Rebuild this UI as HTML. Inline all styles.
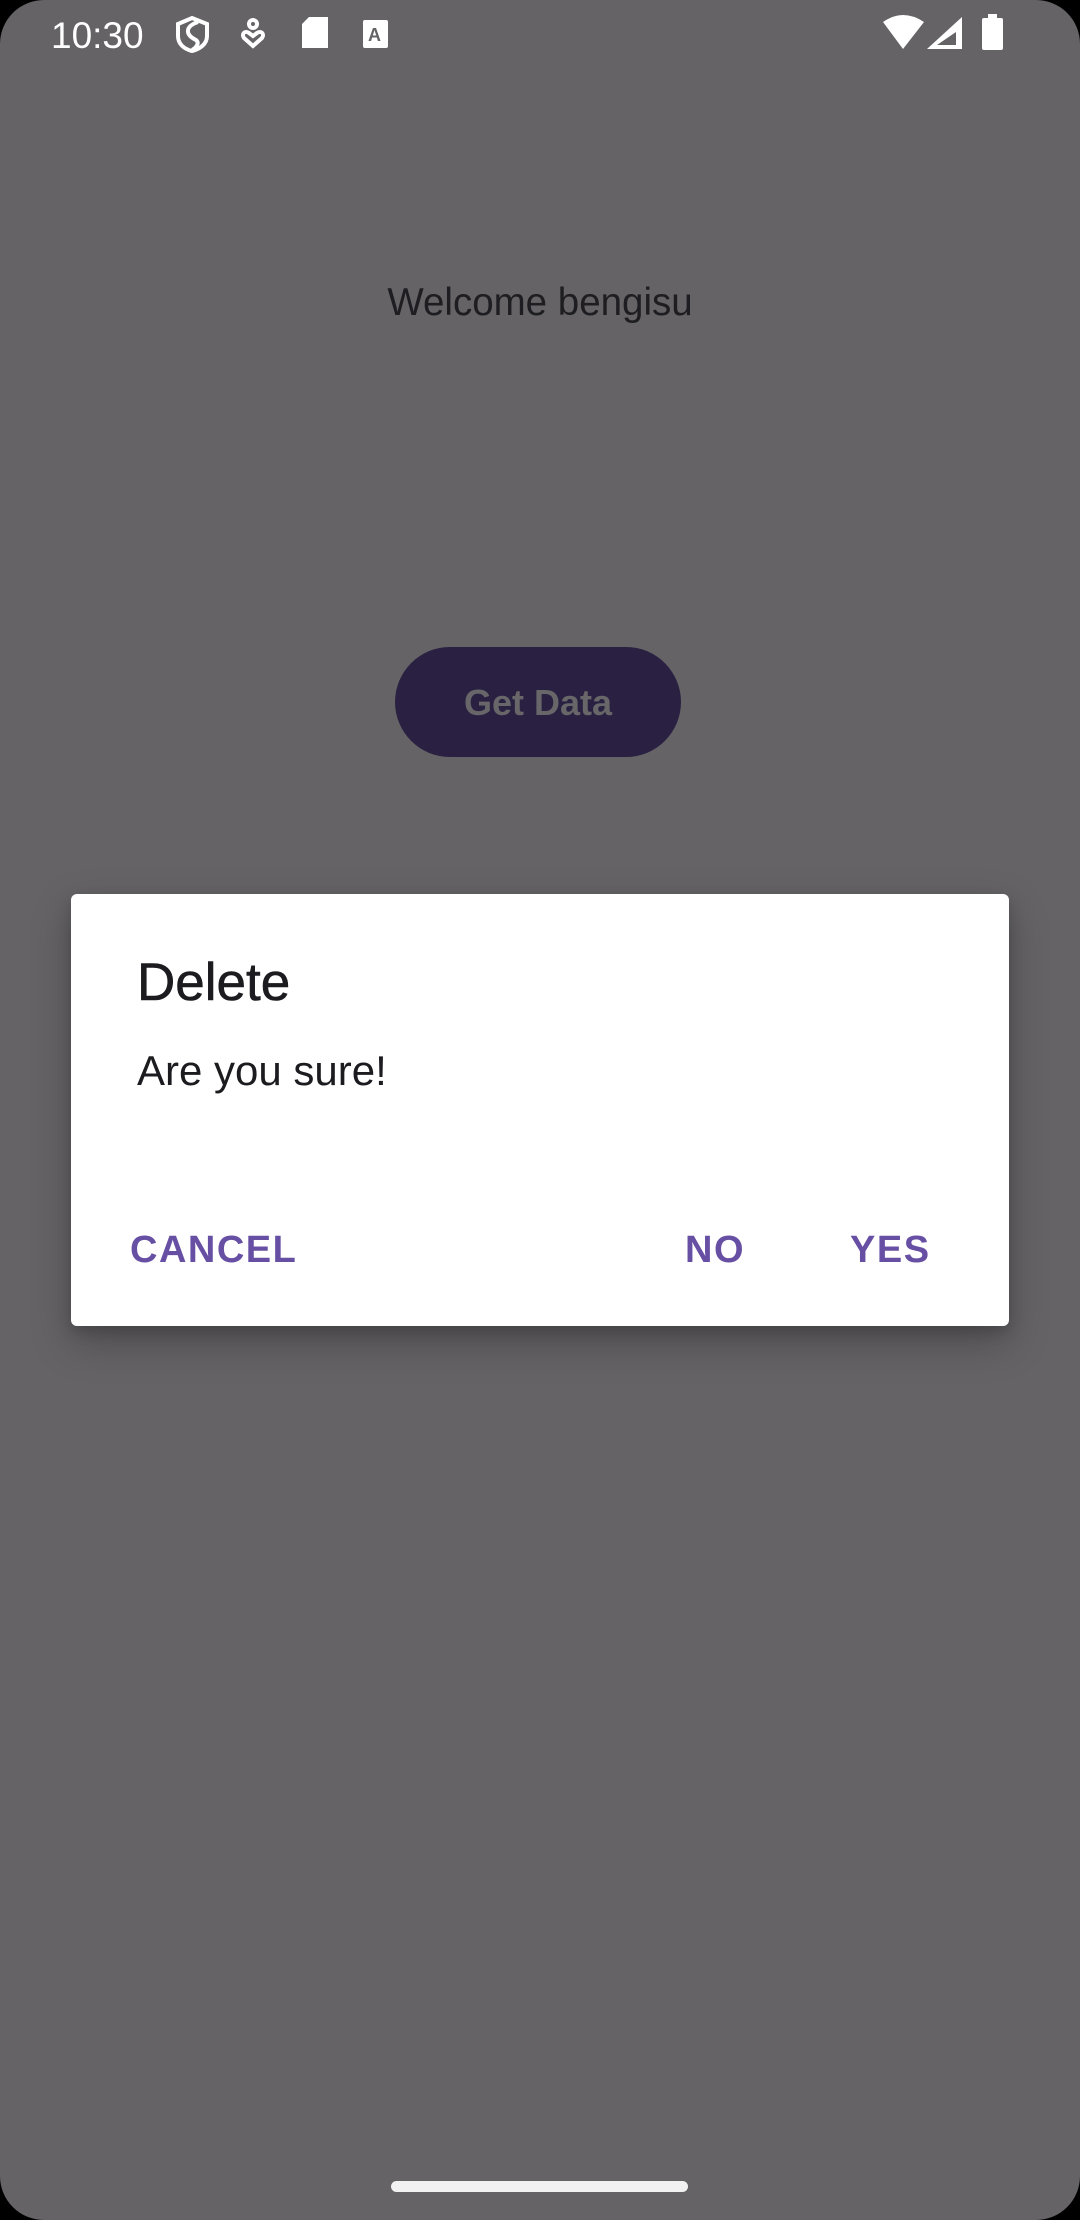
<!DOCTYPE html>
<html><head><meta charset="utf-8"><style>
*{margin:0;padding:0;box-sizing:border-box}
html,body{width:1080px;height:2220px;background:#000;overflow:hidden}
#s{position:absolute;left:0;top:0;width:1080px;height:2220px;background:#656366;border-radius:44px;overflow:hidden;font-family:"Liberation Sans",sans-serif}
.t{position:absolute;white-space:nowrap;line-height:1}
</style></head><body><div id="s">
<div class="t" style="left:51px;top:17px;font-size:37px;color:#fff;letter-spacing:0px">10:30</div>
<svg style="position:absolute;left:0;top:0" width="1080" height="60">
<g fill="none" stroke="#fff" stroke-width="4">
<path d="M192 18 L207 24 V36 C207 44 200 49 192 51 C184 49 178 44 178 36 V24 Z"/>
<path d="M198 22 C186 26 184 34 196 40 C200 43 196 48 192 50"/>
<circle cx="253" cy="24" r="4"/>
<path d="M253 46 L244 38 C241 34 245 30 249 33 L253 36 L257 33 C261 30 265 34 262 38 Z"/>
</g>
<path fill="#fff" d="M309 17 H328 V48 H302 V24 Z"/>
<rect x="363" y="20" width="25" height="28" rx="2" fill="#fff"/>
<text x="368" y="41" font-family="Liberation Sans" font-size="18" font-weight="bold" fill="#656366">A</text>
<path fill="#fff" d="M883 22 Q903 8 924 22 L903 49 Z"/>
<path fill="#fff" d="M962 17 V49 H927 Z M956 32 L937 45 H956 Z" fill-rule="evenodd"/>
<rect x="988" y="14" width="9" height="5" fill="#fff"/>
<rect x="982" y="18" width="21" height="32" rx="2" fill="#fff"/>
</svg>
<div class="t" style="left:0;width:1080px;text-align:center;top:284px;font-size:38.5px;color:#1e1d21;padding-left:-4px">Welcome bengisu</div>
<div style="position:absolute;left:395px;top:647px;width:286px;height:110px;border-radius:55px;background:#2a2142"></div>
<div class="t" style="left:395px;width:286px;text-align:center;top:685px;font-size:36px;font-weight:bold;color:#686669">Get Data</div>
<div style="position:absolute;left:71px;top:894px;width:938px;height:432px;background:#fff;border-radius:6px;box-shadow:0 16px 40px rgba(0,0,0,0.25),0 6px 14px rgba(0,0,0,0.15)"></div>
<div class="t" style="left:137px;top:956px;font-size:53px;color:#1c1b1f;-webkit-text-stroke:0.6px #1c1b1f">Delete</div>
<div class="t" style="left:137px;top:1050px;font-size:42px;color:#1c1b1f">Are you sure!</div>
<div class="t" style="left:130px;top:1231px;font-size:38px;font-weight:bold;color:#6750a4;letter-spacing:1.5px">CANCEL</div>
<div class="t" style="left:685px;top:1231px;font-size:38px;font-weight:bold;color:#6750a4;letter-spacing:1.5px">NO</div>
<div class="t" style="left:850px;top:1231px;font-size:38px;font-weight:bold;color:#6750a4;letter-spacing:1.5px">YES</div>
<div style="position:absolute;left:391px;top:2181px;width:297px;height:11px;border-radius:6px;background:#f2f2f2"></div>
</div></body></html>
